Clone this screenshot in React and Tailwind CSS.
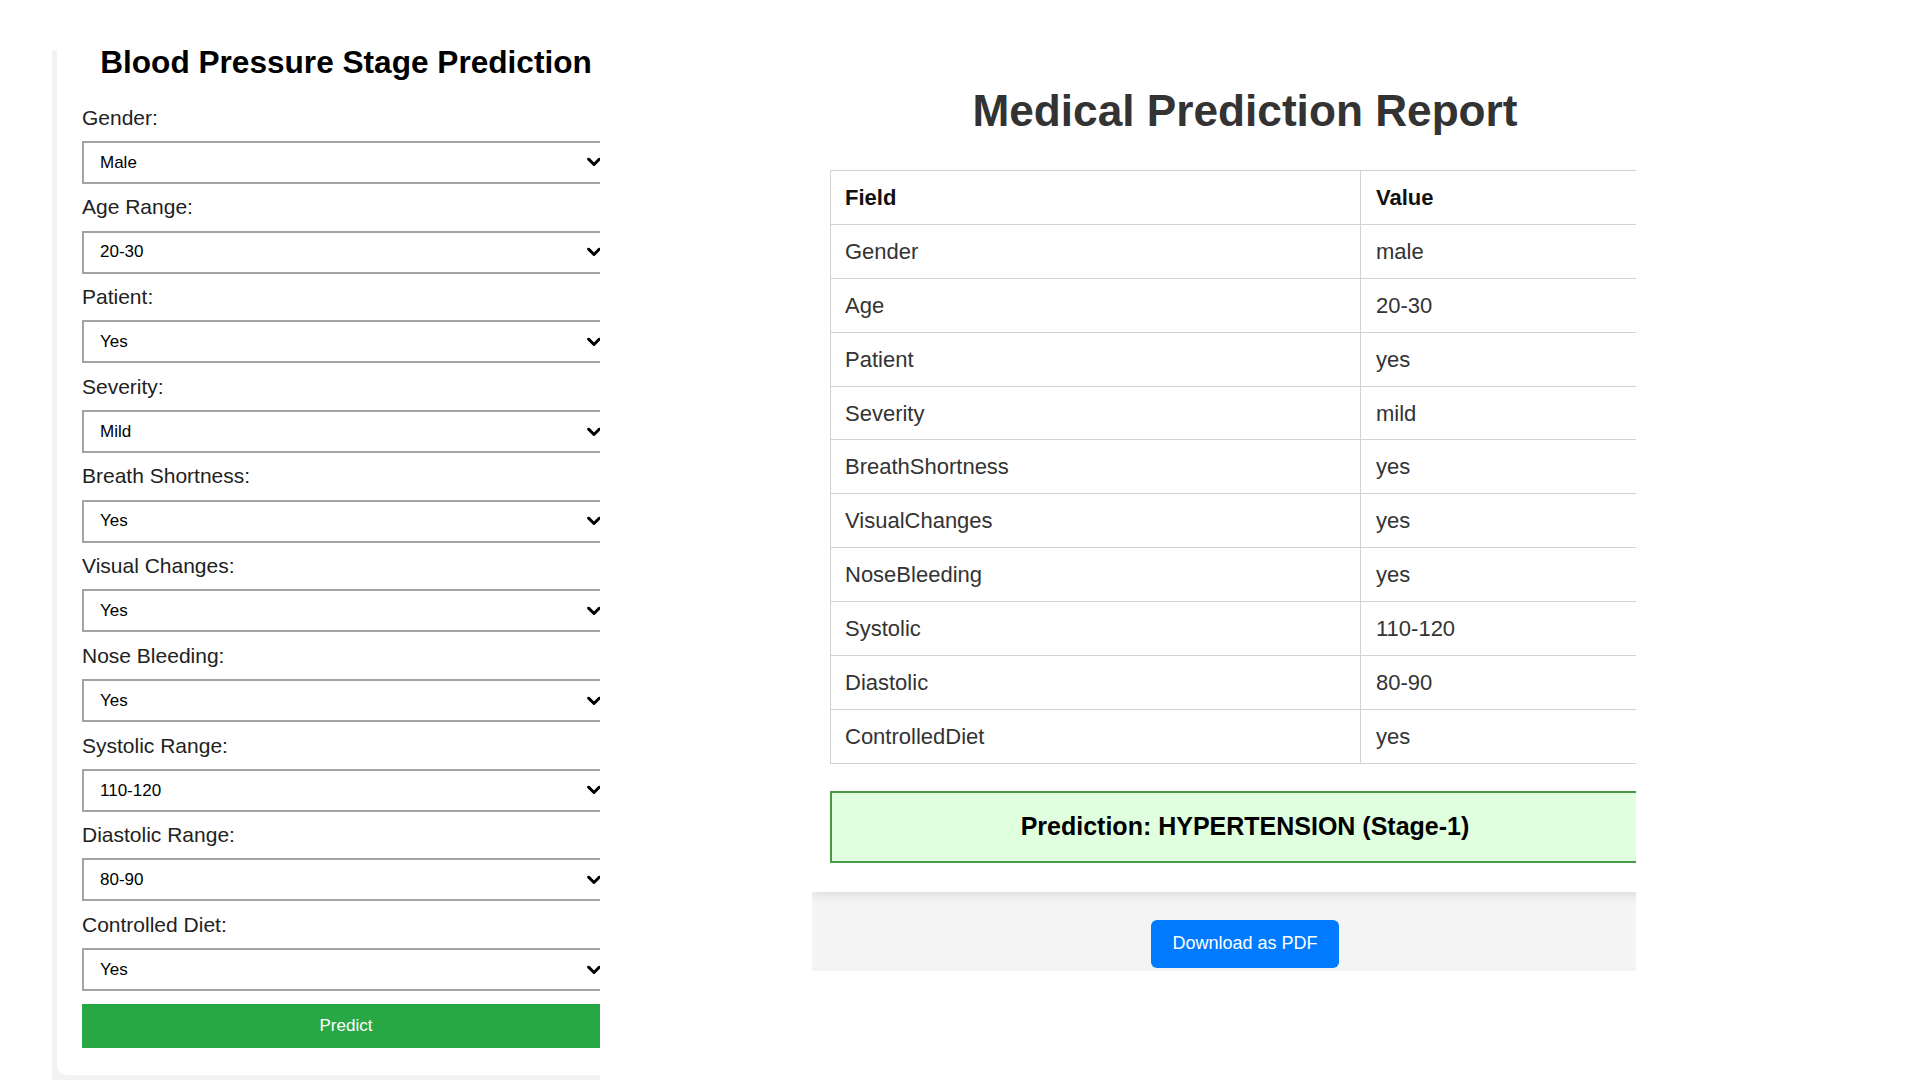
import { useState } from 'react'

const FIELDS = [
  { name: 'gender', label: 'Gender:', options: ['Male', 'Female'] },
  { name: 'age', label: 'Age Range:', options: ['20-30', '31-40', '41-50', '51-60'] },
  { name: 'patient', label: 'Patient:', options: ['Yes', 'No'] },
  { name: 'severity', label: 'Severity:', options: ['Mild', 'Moderate', 'Severe'] },
  { name: 'breath', label: 'Breath Shortness:', options: ['Yes', 'No'] },
  { name: 'visual', label: 'Visual Changes:', options: ['Yes', 'No'] },
  { name: 'nose', label: 'Nose Bleeding:', options: ['Yes', 'No'] },
  { name: 'systolic', label: 'Systolic Range:', options: ['110-120', '121-130', '130+'] },
  { name: 'diastolic', label: 'Diastolic Range:', options: ['80-90', '70-80', '100+'] },
  { name: 'diet', label: 'Controlled Diet:', options: ['Yes', 'No'] },
]

const REPORT = [
  ['Gender', 'male'],
  ['Age', '20-30'],
  ['Patient', 'yes'],
  ['Severity', 'mild'],
  ['BreathShortness', 'yes'],
  ['VisualChanges', 'yes'],
  ['NoseBleeding', 'yes'],
  ['Systolic', '110-120'],
  ['Diastolic', '80-90'],
  ['ControlledDiet', 'yes'],
]

function Chevron() {
  return (
    <svg
      className="absolute right-[9px] top-1/2 -translate-y-1/2 pointer-events-none"
      width="14"
      height="9"
      viewBox="0 0 14 9"
    >
      <polyline points="1.6,1.6 7,7 12.4,1.6" fill="none" stroke="#000" strokeWidth="2.9" strokeLinecap="round" strokeLinejoin="round" />
    </svg>
  )
}

function PredictForm() {
  const [values, setValues] = useState(() =>
    Object.fromEntries(FIELDS.map(f => [f.name, f.options[0]]))
  )

  return (
    <div className="mt-[44px] ml-[52px] w-[548px] h-[1036px] overflow-hidden bg-[linear-gradient(to_bottom,#fff_6px,#f2f2f2_6px)] shrink-0">
      <div className="ml-[5px] w-[578px] h-[1031px] bg-white rounded-b-[10px] px-[25px]">
        <h2 className="text-[31.6px] leading-[36px] font-bold text-center text-black">
          Blood Pressure Stage Prediction
        </h2>

        <form className="mt-[25.7px]" onSubmit={e => e.preventDefault()}>
          {FIELDS.map(f => (
            <div key={f.name} className="mb-[11.4px]">
              <label className="block text-[21px] leading-[24px] text-[#222]">{f.label}</label>
              <div className="relative mt-[11.3px] h-[43px]">
                <select
                  className="appearance-none w-full h-full border-2 border-[#a3a3a3] bg-white pl-[16px] text-[17px] text-black outline-none"
                  value={values[f.name]}
                  onChange={e => setValues(v => ({ ...v, [f.name]: e.target.value }))}
                >
                  {f.options.map(o => (
                    <option key={o} value={o}>{o}</option>
                  ))}
                </select>
                <Chevron />
              </div>
            </div>
          ))}

          <button
            type="submit"
            className="mt-[1.3px] w-full h-[44px] bg-[#28a745] text-white text-[17px]"
          >
            Predict
          </button>
        </form>
      </div>
    </div>
  )
}

function Report() {
  return (
    <div className="ml-[212px] w-[824px] h-[971px] overflow-hidden bg-[#f4f4f4] shrink-0">
      <div className="w-[866px] bg-white shadow-[0_2px_10px_rgba(0,0,0,0.12)] pt-[85px] px-[18px] pb-[29px]">
        <h1 className="text-[44.2px] leading-[52px] font-bold text-[#333] text-center">
          Medical Prediction Report
        </h1>

        <table className="mt-[33px] w-full border-collapse">
          <thead>
            <tr>
              <th className="w-[530px] h-[53.9px] border border-[#d2d2d2] px-[14px] text-left text-[22px] font-bold text-[#111]">Field</th>
              <th className="h-[53.9px] border border-[#d2d2d2] px-[15px] text-left text-[22px] font-bold text-[#111]">Value</th>
            </tr>
          </thead>
          <tbody>
            {REPORT.map(([field, value]) => (
              <tr key={field}>
                <td className="h-[53.9px] border border-[#d2d2d2] px-[14px] text-[22px] text-[#333]">{field}</td>
                <td className="h-[53.9px] border border-[#d2d2d2] px-[15px] text-[22px] text-[#333]">{value}</td>
              </tr>
            ))}
          </tbody>
        </table>

        <div className="mt-[27px] h-[72px] border-2 border-[#459a45] bg-[#dfffdf] flex items-center justify-center text-[25px] font-bold text-black">
          Prediction: HYPERTENSION (Stage-1)
        </div>
      </div>

      <div className="w-[866px] pt-[28px] flex justify-center">
        <button className="h-[48px] px-[21px] rounded-[6px] bg-[#007bff] text-white text-[18px]">
          Download as PDF
        </button>
      </div>
    </div>
  )
}

export default function App() {
  return (
    <div className="w-[1920px] h-[1080px] bg-white flex items-start overflow-hidden font-['Liberation_Sans',Arial,sans-serif]">
      <PredictForm />
      <Report />
    </div>
  )
}
